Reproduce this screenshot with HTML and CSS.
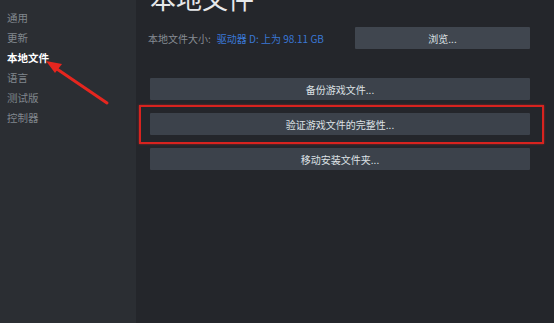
FILE: index.html
```html
<!DOCTYPE html>
<html>
<head>
<meta charset="utf-8">
<link rel="stylesheet" href="styles.css">
</head>
<body>
<div class="app">
  <nav class="sidebar">
    <div class="nav-item">通用</div>
    <div class="nav-item">更新</div>
    <div class="nav-item active">本地文件</div>
    <div class="nav-item">语言</div>
    <div class="nav-item">测试版</div>
    <div class="nav-item">控制器</div>
  </nav>
  <main class="main">
    <h1 class="title">本地文件</h1>
    <div class="size-row">
      <span class="label">本地文件大小:</span>
      <span class="value">驱动器 D: 上为 98.11 GB</span>
      <button class="btn browse">浏览...</button>
    </div>
    <div class="actions">
      <button class="btn">备份游戏文件...</button>
      <div class="highlight-wrap">
        <button class="btn">验证游戏文件的完整性...</button>
        <div class="highlight"></div>
      </div>
      <button class="btn">移动安装文件夹...</button>
    </div>
  </main>
  <svg class="arrow" width="554" height="323" viewBox="0 0 554 323">
    <line x1="107" y1="103" x2="54" y2="67" stroke="#e5261f" stroke-width="3" stroke-linecap="round"/>
    <polygon points="46,61 62,64 55,73" fill="#e5261f"/>
  </svg>
</div>
</body>
</html>
```
FILE: styles.css
```css
* { box-sizing: border-box; }
html, body { margin: 0; padding: 0; }
body {
  width: 554px;
  height: 323px;
  overflow: hidden;
  background: #24262b;
  font-family: "Noto Sans CJK SC", "Liberation Sans", sans-serif;
}
.app {
  position: relative;
  display: flex;
  width: 554px;
  height: 323px;
}
.sidebar {
  width: 136px;
  flex: none;
  background: #2b2e33;
  padding: 8px 0 0 7px;
  display: flex;
  flex-direction: column;
}
.nav-item {
  height: 20px;
  line-height: 20px;
  font-size: 10.5px;
  color: #80868d;
}
.nav-item.active {
  color: #ffffff;
  font-weight: bold;
}
.main {
  flex: 1;
  padding: 0 24px 0 14px;
  display: flex;
  flex-direction: column;
}
.title {
  margin: -17px 0 0 0;
  font-size: 26px;
  line-height: 30px;
  font-weight: normal;
  color: #e6e8ea;
}
.size-row {
  display: flex;
  align-items: center;
  margin-top: 14px;
  height: 22px;
  font-size: 10px;
}
.label {
  color: #878d94;
  margin-left: -2px;
}
.value {
  color: #3a78d6;
  margin-left: 6px;
}
.btn {
  display: block;
  border: none;
  margin: 0;
  padding: 0;
  height: 22px;
  width: 100%;
  background: #3c424b;
  color: #dde1e5;
  font-family: "Noto Sans CJK SC", "Liberation Sans", sans-serif;
  font-size: 10px;
  text-align: center;
  border-radius: 1px;
}
.btn.browse {
  width: 175px;
  margin-left: auto;
  background: #40464f;
}
.actions {
  margin-top: 29px;
  display: flex;
  flex-direction: column;
  gap: 13px;
}
.highlight-wrap {
  position: relative;
}
.highlight {
  position: absolute;
  left: -11px;
  right: -14px;
  top: -8px;
  bottom: -9px;
  border: 2px solid #d8231f;
  box-shadow: 0 0 2px rgba(230, 40, 35, 0.6);
  pointer-events: none;
}
.arrow {
  position: absolute;
  left: 0;
  top: 0;
  pointer-events: none;
}
```
